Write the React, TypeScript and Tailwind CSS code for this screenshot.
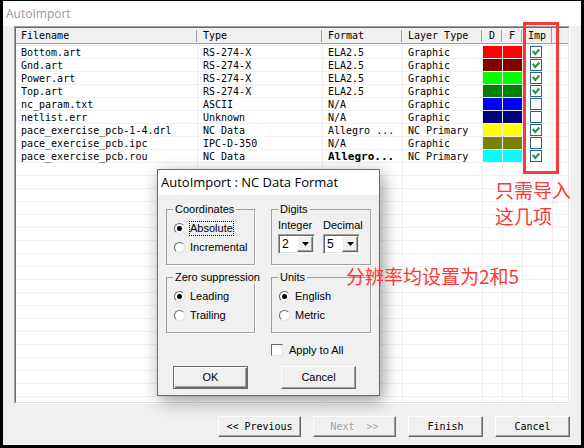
import { useState } from "react";
import type { ReactNode } from "react";
import clsx from "clsx";

type FileRow = {
  name: string;
  type: string;
  format: string;
  layer: string;
  color: string;
  imported: boolean;
  bold?: boolean;
};

const files: FileRow[] = [
  { name: "Bottom.art", type: "RS-274-X", format: "ELA2.5", layer: "Graphic", color: "bg-[#ff0000]", imported: true },
  { name: "Gnd.art", type: "RS-274-X", format: "ELA2.5", layer: "Graphic", color: "bg-[#800000]", imported: true },
  { name: "Power.art", type: "RS-274-X", format: "ELA2.5", layer: "Graphic", color: "bg-[#00ff00]", imported: true },
  { name: "Top.art", type: "RS-274-X", format: "ELA2.5", layer: "Graphic", color: "bg-[#008000]", imported: true },
  { name: "nc_param.txt", type: "ASCII", format: "N/A", layer: "Graphic", color: "bg-[#0000ff]", imported: false },
  { name: "netlist.err", type: "Unknown", format: "N/A", layer: "Graphic", color: "bg-[#000080]", imported: false },
  { name: "pace_exercise_pcb-1-4.drl", type: "NC Data", format: "Allegro ...", layer: "NC Primary", color: "bg-[#ffff00]", imported: true },
  { name: "pace_exercise_pcb.ipc", type: "IPC-D-350", format: "N/A", layer: "Graphic", color: "bg-[#808000]", imported: false },
  { name: "pace_exercise_pcb.rou", type: "NC Data", format: "Allegro...", layer: "NC Primary", color: "bg-[#00ffff]", imported: true, bold: true },
];

const emptyRows = Array.from({ length: 20 }, (_, i) => i);
const columns = ["Filename", "Type", "Format", "Layer Type", "D", "F", "Imp"];
const cell = "h-[13px] overflow-hidden border-r border-b border-[#f0f0f0] bg-clip-padding p-0 whitespace-nowrap";
const textCell =
  "h-[13px] border-r border-b border-[#f0f0f0] pt-px pr-0 pb-0 pl-[5px] leading-[11px] whitespace-nowrap";
const raised =
  "border border-t-white border-l-white border-r-[#696969] border-b-[#696969] bg-[#f0f0f0] shadow-[inset_-1px_-1px_0_#a0a0a0]";

function ImportBox({ file }: { file: FileRow }) {
  const [on, setOn] = useState(file.imported);
  return (
    <span className="relative ml-[7px] block size-3">
      <input
        type="checkbox"
        aria-label={`Import ${file.name}`}
        checked={on}
        onChange={() => setOn(!on)}
        className="block size-3 appearance-none border border-[#2c639c] bg-white"
      />
      {on && (
        <svg viewBox="0 0 12 12" className="pointer-events-none absolute inset-0 size-3" aria-hidden="true">
          <path d="M2.8 4.8 L5.2 8 L9.4 3.6" fill="none" stroke="#2f963c" strokeWidth="2.2" />
        </svg>
      )}
    </span>
  );
}

function FileTable() {
  return (
    <table className="w-full table-fixed border-separate border-spacing-0 text-left text-[10px] leading-3">
      <colgroup>
        <col className="w-[182px]" />
        <col className="w-[125px]" />
        <col className="w-[80px]" />
        <col className="w-[80px]" />
        <col className="w-[20px]" />
        <col className="w-[20px]" />
        <col className="w-[30px]" />
        <col />
      </colgroup>
      <thead>
        <tr>
          {columns.map((c, i) => (
            <th key={c} className="border-b border-[#a0a0a0] bg-[#f0f0f0] p-0 font-normal">
              <div className="flex h-[15px] items-center pr-px">
                <span className={clsx("flex-1 pt-px", i < 4 ? "pl-[5px]" : "text-center")}>{c}</span>
                <span className={clsx("border-r border-[#a0a0a0]", i === 6 ? "h-full" : "h-3")} />
              </div>
            </th>
          ))}
          <th className="border-b border-[#a0a0a0] bg-[#f0f0f0] p-0" />
        </tr>
      </thead>
      <tbody>
        <tr aria-hidden="true">
          {columns.map((c) => (
            <td key={c} className="h-[2px] border-r border-b border-[#f0f0f0] p-0" />
          ))}
          <td className="h-[2px] border-b border-[#f0f0f0] p-0" />
        </tr>
        {files.map((f) => (
          <tr key={f.name}>
            <td className={textCell}>{f.name}</td>
            <td className={textCell}>{f.type}</td>
            <td className={clsx(textCell, f.bold && "text-[11px] font-bold")}>{f.format}</td>
            <td className={textCell}>{f.layer}</td>
            <td className={clsx(cell, f.color)} />
            <td className={clsx(cell, f.color)} />
            <td className={cell}>
              <ImportBox file={f} />
            </td>
            <td className="border-b border-[#f0f0f0] p-0" />
          </tr>
        ))}
        {emptyRows.map((r) => (
          <tr key={r} aria-hidden="true">
            {columns.map((c) => (
              <td key={c} className={cell} />
            ))}
            <td className="border-b border-[#f0f0f0] p-0" />
          </tr>
        ))}
      </tbody>
    </table>
  );
}

function Group({ title, children }: { title: string; children: ReactNode }) {
  return (
    <fieldset className="h-[62px] min-w-0 border border-[#a0a0a0] pl-1.5 shadow-[1px_1px_0_#fff]">
      <legend className="px-0.5 leading-[13px] whitespace-nowrap">{title}</legend>
      {children}
    </fieldset>
  );
}

function Radios({ name, options, focused }: { name: string; options: string[]; focused?: boolean }) {
  return (
    <div className="flex flex-col pt-[3px] pl-px">
      {options.map((o, i) => (
        <label key={o} className="flex h-[19px] items-center gap-1">
          <input
            type="radio"
            name={name}
            defaultChecked={i === 0}
            className="size-[11px] appearance-none rounded-full border border-t-[#696969] border-r-[#e3e3e3] border-b-[#e3e3e3] border-l-[#696969] bg-white checked:bg-[radial-gradient(circle,#000_0,#000_2px,#fff_3px)]"
          />
          <span className={clsx("border leading-[13px]", focused && i === 0 ? "border-dotted border-black" : "border-transparent")}>
            {o}
          </span>
        </label>
      ))}
    </div>
  );
}

function DigitSelect({ label, value }: { label: string; value: string }) {
  return (
    <label className="flex w-[37px] flex-col gap-0.5">
      <span className="leading-[14px]">{label}</span>
      <span className="relative block">
        <select
          defaultValue={value}
          className="block h-5 w-full appearance-none border border-t-[#a0a0a0] border-r-white border-b-white border-l-[#a0a0a0] bg-white pl-[3px] text-[12px] leading-4 shadow-[inset_1px_1px_0_#696969,inset_-1px_-1px_0_#e3e3e3]"
        >
          {["1", "2", "3", "4", "5", "6"].map((n) => (
            <option key={n}>{n}</option>
          ))}
        </select>
        <span className={clsx(raised, "pointer-events-none absolute top-0.5 right-0.5 flex h-4 w-4 items-center justify-center")}>
          <svg viewBox="0 0 7 4" className="h-1 w-[7px]" aria-hidden="true">
            <path d="M0 0H7L3.5 4Z" fill="#000" />
          </svg>
        </span>
      </span>
    </label>
  );
}

function FormatDialog() {
  return (
    <section
      role="dialog"
      aria-label="NC Data Format"
      className="absolute top-[168px] left-[154px] w-[223px] border border-[#6b6b6b] bg-[#f0f0f0] font-['Liberation_Sans',sans-serif] text-[11px] shadow-[3px_5px_16px_rgba(0,0,0,0.4)]"
    >
      <h2 className="flex h-[25px] items-center bg-white pl-[3px] font-['Open_Sans','Noto_Sans',sans-serif] text-[13px]">
        AutoImport : NC Data Format
      </h2>
      <form className="px-2 pt-2 pb-1.5" onSubmit={(e) => e.preventDefault()}>
        <div className="grid grid-cols-[89px_1fr] gap-x-4 gap-y-1.5">
          <Group title="Coordinates">
            <Radios name="coordinates" options={["Absolute", "Incremental"]} focused />
          </Group>
          <Group title="Digits">
            <div className="flex gap-2 pt-0.5">
              <DigitSelect label="Integer" value="2" />
              <DigitSelect label="Decimal" value="5" />
            </div>
          </Group>
          <Group title="Zero suppression">
            <Radios name="zero" options={["Leading", "Trailing"]} />
          </Group>
          <Group title="Units">
            <Radios name="units" options={["English", "Metric"]} />
          </Group>
        </div>
        <label className="mt-2.5 ml-[105px] flex h-3.5 items-center gap-1.5">
          <input
            type="checkbox"
            className="size-3 appearance-none border border-t-[#696969] border-r-[#e3e3e3] border-b-[#e3e3e3] border-l-[#696969] bg-white"
          />
          Apply to All
        </label>
        <div className="mt-[9px] flex justify-between pr-[15px] pl-[7px]">
          <button className="h-[23px] w-[75px] border border-[#696969] bg-[#f0f0f0] shadow-[inset_1px_1px_0_#fff,inset_-1px_-1px_0_#696969,inset_-2px_-2px_0_#a0a0a0]">
            OK
          </button>
          <button type="button" className={clsx(raised, "h-[23px] w-[75px]")}>
            Cancel
          </button>
        </div>
      </form>
    </section>
  );
}

export default function App() {
  return (
    <div className="relative flex h-screen flex-col overflow-hidden border-x-[3px] border-t border-b-[3px] border-black bg-[#f0f0f0] font-['DejaVu_Sans_Mono','Liberation_Mono',monospace] text-[10px] text-black">
      <h1 className="flex h-[25px] shrink-0 items-center bg-white pl-[3px] font-['Open_Sans','Noto_Sans',sans-serif] text-[12px] text-[#999]">
        AutoImport
      </h1>
      <main className="mx-[11px] min-h-0 flex-1 overflow-hidden border border-t-[#a0a0a0] border-r-white border-b-white border-l-[#a0a0a0]">
        <div className="h-full overflow-hidden border border-t-[#696969] border-r-[#e3e3e3] border-b-[#e3e3e3] border-l-[#696969] bg-white">
          <FileTable />
        </div>
      </main>
      <footer className="flex shrink-0 justify-end gap-3 pt-3 pr-[11px] pb-2">
        <button className={clsx(raised, "h-[21px] w-[83px]")}>&lt;&lt; Previous</button>
        <button disabled className={clsx(raised, "h-[21px] w-[83px] whitespace-pre text-[#a0a0a0] [text-shadow:1px_1px_0_#fff]")}>
          {"Next  >>"}
        </button>
        <button className={clsx(raised, "h-[21px] w-[75px]")}>Finish</button>
        <button className={clsx(raised, "h-[21px] w-[75px]")}>Cancel</button>
      </footer>

      <FormatDialog />

      <div className="pointer-events-none absolute top-[21px] left-[520px] h-[152px] w-[36px] border-[3px] border-[#fb3838]" />
      <p className="absolute top-[176px] left-[492px] font-['Noto_Sans_CJK_SC',sans-serif] text-[19px] leading-[26px] whitespace-nowrap text-[#fb3838]">
        只需导入
        <br />
        这几项
      </p>
      <p className="absolute top-[262px] left-[343px] font-['Noto_Sans_CJK_SC',sans-serif] text-[19px] leading-[26px] whitespace-nowrap text-[#fb3838]">
        分辨率均设置为2和5
      </p>
    </div>
  );
}
